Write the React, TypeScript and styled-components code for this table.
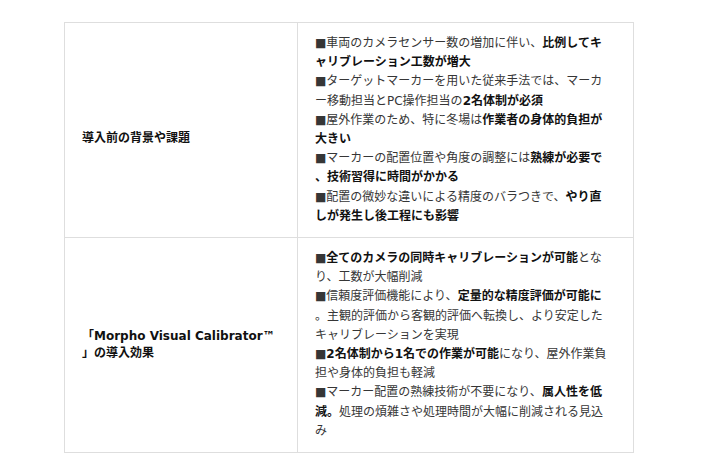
import React from 'react';
import styled, {createGlobalStyle} from 'styled-components';

const GlobalStyle = createGlobalStyle`
  html, body {
    margin: 0;
    padding: 0;
    background: #fff;
  }
`;

const Page = styled.div`
  padding: 22px 0 0 64px;
  font-family: "DejaVu Sans", "Noto Sans CJK JP", sans-serif;
  font-size: 12px;
  color: #363636;
`;

const Table = styled.div`
  display: grid;
  grid-template-columns: 233px 336px;
  width: 569px;
  border-top: 1px solid #dedede;
  border-left: 1px solid #dedede;
`;

const HeadCell = styled.div<{ $top: number }>`
  display: flex;
  align-items: center;
  padding: ${p => p.$top}px 17px 11px;
  border-right: 1px solid #dedede;
  border-bottom: 1px solid #dedede;
  font-weight: 700;
  color: #111;
  line-height: 17.5px;
  line-break: anywhere;
`;

const BodyCell = styled.div`
  padding: 11px 25px 11px 17px;
  border-right: 1px solid #dedede;
  border-bottom: 1px solid #dedede;
  line-height: 19.2px;
  line-break: anywhere;
`;

const Item = styled.p`
  margin: 0;
`;

const Em = styled.strong`
  font-weight: 700;
  color: #111;
`;

type Row = {
    head: React.ReactNode;
    headTop: number;
    items: React.ReactNode[];
};

const rows: Row[] = [
    {
        head: '導入前の背景や課題',
        headTop: 29,
        items: [
            <>■車両のカメラセンサー数の増加に伴い、<Em>比例してキャリブレーション工数が増大</Em></>,
            <>■ターゲットマーカーを用いた従来手法では、マーカー移動担当とPC操作担当の<Em>2名体制が必須</Em></>,
            <>■屋外作業のため、特に冬場は<Em>作業者の身体的負担が大きい</Em></>,
            <>■マーカーの配置位置や角度の調整には<Em>熟練が必要で、技術習得に時間がかかる</Em></>,
            <>■配置の微妙な違いによる精度のバラつきで、<Em>やり直しが発生し後工程にも影響</Em></>,
        ],
    },
    {
        head: '「Morpho Visual Calibrator™」の導入効果',
        headTop: 11,
        items: [
            <>■<Em>全てのカメラの同時キャリブレーションが可能</Em>となり、工数が大幅削減</>,
            <>■信頼度評価機能により、<Em>定量的な精度評価が可能に</Em>。主観的評価から客観的評価へ転換し、より安定したキャリブレーションを実現</>,
            <>■<Em>2名体制から1名での作業が可能</Em>になり、屋外作業負担や身体的負担も軽減</>,
            <>■マーカー配置の熟練技術が不要になり、<Em>属人性を低減。</Em>処理の煩雑さや処理時間が大幅に削減される見込み</>,
        ],
    },
];

export default function App() {
    return (
        <>
            <GlobalStyle/>
            <Page>
                <Table>
                    {rows.map((row, i) => (
                        <React.Fragment key={i}>
                            <HeadCell $top={row.headTop}>{row.head}</HeadCell>
                            <BodyCell>
                                {row.items.map((item, j) => <Item key={j}>{item}</Item>)}
                            </BodyCell>
                        </React.Fragment>
                    ))}
                </Table>
            </Page>
        </>
    );
}
